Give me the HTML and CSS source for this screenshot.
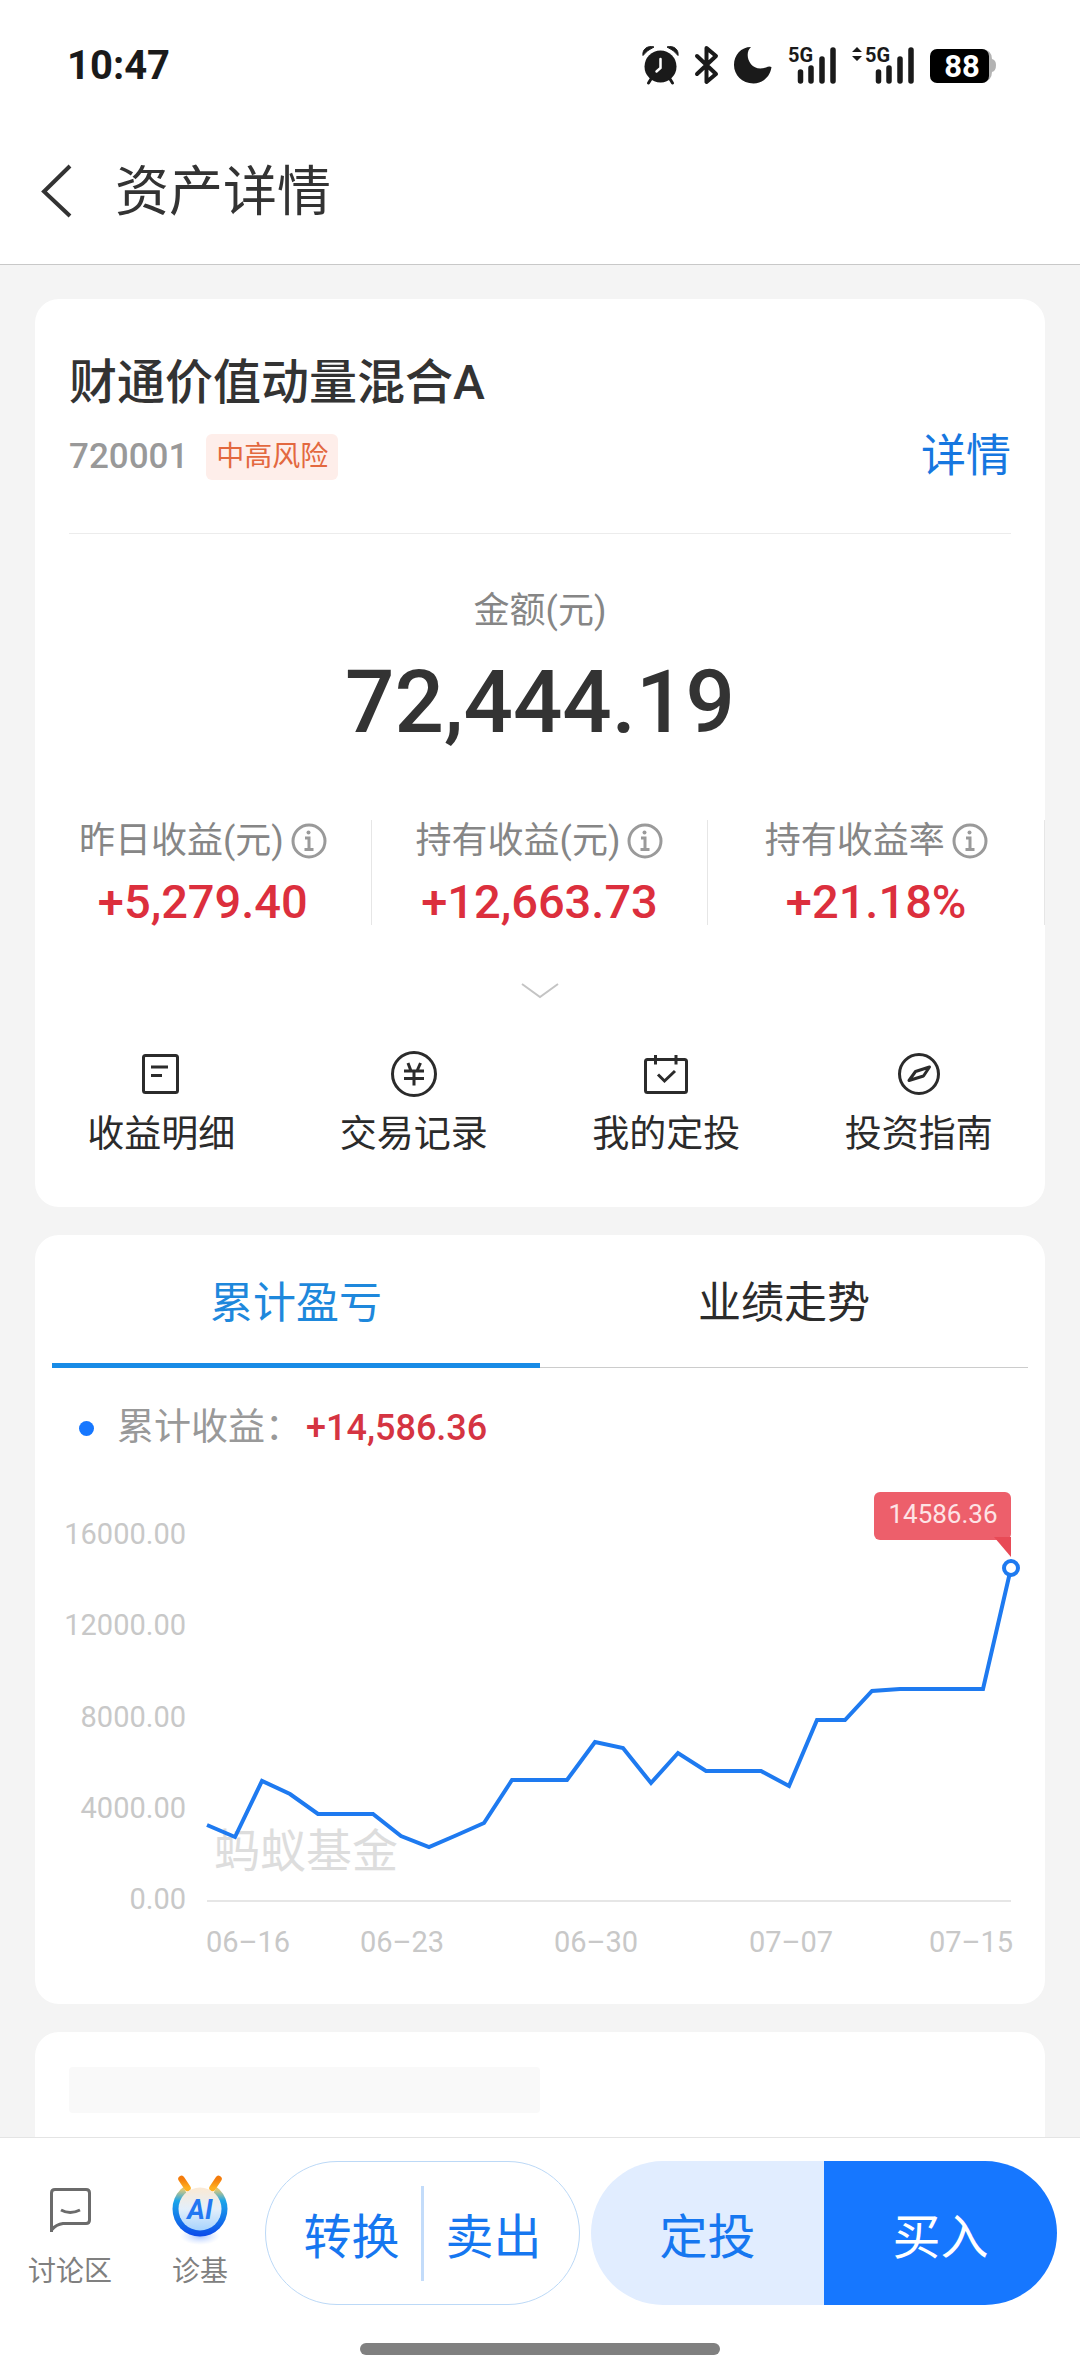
FILE: index.html
```html
<!DOCTYPE html>
<html lang="zh-CN">
<head>
  <meta charset="UTF-8" />
  <meta name="viewport" content="width=device-width, initial-scale=1.0" />
  <title>资产详情</title>
  <link rel="stylesheet" href="styles.css">
</head>
<body>
  <header class="header">
    <div class="status-bar">
      <span class="time">10:47</span>
      <div class="status-icons">
        <svg width="37" height="38" viewBox="0 0 37 38">
          <circle cx="18.500" cy="20.500" r="16" fill="#1a1a1a"/>
          <path d="M1 9.500C0 4 5-1 12 1Q5 4 1 9.500ZM36 9.500C37 4 32-1 25 1Q32 4 36 9.500Z" fill="#1a1a1a" stroke="#1a1a1a" stroke-width="1"/>
          <path d="M9 33L6.500 37M28 33L30.500 37" stroke="#1a1a1a" stroke-width="3" stroke-linecap="round"/>
          <path d="M18.500 13V22L14.500 25.500" fill="none" stroke="#fff" stroke-width="2.500" stroke-linecap="round"/>
        </svg>
        <svg width="23" height="38" viewBox="0 0 23 38">
          <path d="M2 10L21 28L11.500 36V2L21 10L2 28" fill="none" stroke="#1a1a1a" stroke-width="4" stroke-linecap="round" stroke-linejoin="round"/>
        </svg>
        <svg width="38" height="38" viewBox="0 0 38 38">
          <path d="M17 1C9 8 16 27 32 21.500Q35 20 37.500 21C36 31 29 37 19.500 37.500C8 37.500 0 29 0 19C0 9 7 1 17 1Z" fill="#1a1a1a"/>
        </svg>
        <svg width="48" height="38" viewBox="0 0 48 38">
          <text class="net" x="0" y="16">5G</text>
          <path d="M12.500 26V35M23 22V35M34 13V35M45 4V35" stroke="#1a1a1a" stroke-width="5.500" stroke-linecap="round"/>
        </svg>
        <svg width="62" height="38" viewBox="0 0 62 38">
          <path d="M0 6L5 1L10 6ZM0 10L5 15L10 10Z" fill="#1a1a1a"/>
          <text class="net" x="13" y="16">5G</text>
          <path d="M26.500 26V35M37 22V35M48 13V35M59 4V35" stroke="#1a1a1a" stroke-width="5.500" stroke-linecap="round"/>
        </svg>
        <svg width="66" height="38" viewBox="0 0 66 38">
          <path d="M52 3Q62 4 62 13Q66 14 66 19Q66 25 62 26Q62 35 52 37Z" fill="#b3b3b3"/>
          <rect x="0" y="3" width="59" height="34" rx="7" fill="#000"/>
          <text class="battery" x="32" y="31">88</text>
        </svg>
      </div>
    </div>
    <div class="nav">
      <button class="back" aria-label="返回">
        <svg width="31" height="52" viewBox="0 0 31 52">
          <path d="M29 1L3 26.500L29 51" fill="none" stroke="#333" stroke-width="4"/>
        </svg>
      </button>
      <h1>资产详情</h1>
    </div>
  </header>

  <main>
    <section class="card asset">
      <div class="fund">
        <h2>财通价值动量混合A</h2>
        <div class="fund-row">
          <span class="code">720001</span>
          <span class="risk">中高风险</span>
          <a class="detail" href="#">详情</a>
        </div>
      </div>

      <div class="amount-label">金额(元)</div>
      <div class="amount">72,444.19</div>

      <div class="stats">
        <div class="stat">
          <div class="stat-label">昨日收益(元)
            <svg class="info" viewBox="0 0 36 36"><circle cx="18" cy="18" r="16"/><path d="M14 15H18V26M13.500 26.500H22.500"/><circle class="info-dot" cx="17.500" cy="9.500" r="2"/></svg>
          </div>
          <div class="stat-value">+5,279.40</div>
        </div>
        <div class="stat">
          <div class="stat-label">持有收益(元)
            <svg class="info" viewBox="0 0 36 36"><circle cx="18" cy="18" r="16"/><path d="M14 15H18V26M13.500 26.500H22.500"/><circle class="info-dot" cx="17.500" cy="9.500" r="2"/></svg>
          </div>
          <div class="stat-value">+12,663.73</div>
        </div>
        <div class="stat">
          <div class="stat-label">持有收益率
            <svg class="info" viewBox="0 0 36 36"><circle cx="18" cy="18" r="16"/><path d="M14 15H18V26M13.500 26.500H22.500"/><circle class="info-dot" cx="17.500" cy="9.500" r="2"/></svg>
          </div>
          <div class="stat-value">+21.18%</div>
        </div>
      </div>

      <button class="expand" aria-label="展开">
        <svg width="38" height="16" viewBox="0 0 38 16"><path d="M1 1L19 14L37 1" fill="none" stroke="#c4c4c4" stroke-width="2"/></svg>
      </button>

      <div class="actions">
        <button class="action">
          <svg class="action-icon" viewBox="0 0 46 46"><rect x="5.500" y="4.500" width="34" height="37" rx="2"/><path d="M13 16H30M13 24.500H24"/></svg>
          收益明细
        </button>
        <button class="action">
          <svg class="action-icon" viewBox="0 0 46 46"><circle cx="23" cy="23" r="21.500"/><path d="M17 12L20 20M29.500 12L26 20M23 20V34.500M13 20H33M13 27.500H33"/></svg>
          交易记录
        </button>
        <button class="action">
          <svg class="action-icon" viewBox="0 0 46 46"><rect x="2.500" y="8.500" width="41" height="33" rx="2"/><path d="M12.500 4V13.500M33 4V13.500M15 23.500L21.500 30L32 20"/></svg>
          我的定投
        </button>
        <button class="action">
          <svg class="action-icon" viewBox="0 0 46 46"><circle cx="23" cy="23" r="19.500"/><path d="M33.500 16L27.500 25L13 29.500L19.500 20.500Z" stroke-linejoin="round"/></svg>
          投资指南
        </button>
      </div>
    </section>

    <section class="card trend">
      <div class="tabs">
        <button class="tab active">累计盈亏</button>
        <button class="tab">业绩走势</button>
      </div>
      <div class="legend">
        <i class="dot"></i>
        <span class="legend-label">累计收益：</span>
        <span class="legend-value">+14,586.36</span>
      </div>

      <svg class="chart" viewBox="0 0 1010 554">
        <g class="y-axis">
          <text x="151" y="94">16000.00</text>
          <text x="151" y="185">12000.00</text>
          <text x="151" y="277">8000.00</text>
          <text x="151" y="368">4000.00</text>
          <text x="151" y="459">0.00</text>
        </g>
        <text class="watermark" x="179" y="417">蚂蚁基金</text>
        <line x1="172" y1="451" x2="976" y2="451" stroke="#e6e6e6" stroke-width="2"/>
        <polyline class="line" points="172,375 200,387 227,331 255,344 283,364 311,364 338,364 366,386 394,397 422,385 449,373 477,330 505,330 532,330 560,292 588,298 616,333 643,303 671,321 699,321 726,321 754,336 782,270 810,270 837,241 865,239 893,239 921,239 948,239 976,118"/>
        <circle cx="976" cy="118" r="7" fill="#fff" stroke="#1e7af0" stroke-width="4"/>
        <!-- 最新收益提示 -->
        <rect x="839" y="42" width="137" height="48" rx="6" fill="#ed5f6b"/>
        <path d="M959 87H976V107Z" fill="#e84a56"/>
        <text class="tip" x="908" y="73">14586.36</text>
        <g class="x-axis">
          <text x="213" y="502">06–16</text>
          <text x="367" y="502">06–23</text>
          <text x="561" y="502">06–30</text>
          <text x="756" y="502">07–07</text>
          <text x="936" y="502">07–15</text>
        </g>
      </svg>
    </section>

    <section class="card">
      <div class="skeleton"></div>
    </section>
  </main>

  <footer class="footer">
    <div class="toolbar">
      <a class="tool" href="#">
        <svg width="66" height="74" viewBox="0 0 66 74">
          <path d="M14.500 58V19Q14.500 15.500 18 15.500H49Q52.500 15.500 52.500 19V46Q52.500 49.500 49 49.500H26Q19 50.500 15 55.500" fill="none" stroke="#6b6b6b" stroke-width="3"/>
          <path d="M24 36Q33 41 43 36" fill="none" stroke="#6b6b6b" stroke-width="3"/>
        </svg>
        讨论区
      </a>
      <a class="tool" href="#">
        <svg width="66" height="74" viewBox="0 0 66 74">
          <defs>
            <linearGradient id="ring" x1="0" y1="0" x2="0" y2="1">
              <stop offset="0" stop-color="#ffb52e"/>
              <stop offset="0.150" stop-color="#d9c77a"/>
              <stop offset="0.350" stop-color="#1ba6ea"/>
              <stop offset="1" stop-color="#0c49ea"/>
            </linearGradient>
            <linearGradient id="face" x1="0" y1="0" x2="0" y2="1">
              <stop offset="0" stop-color="#fbe9d3"/>
              <stop offset="0.500" stop-color="#e3effb"/>
              <stop offset="1" stop-color="#a6d3fd"/>
            </linearGradient>
            <linearGradient id="horn" x1="0" y1="0" x2="0" y2="1">
              <stop offset="0" stop-color="#f47c0c"/>
              <stop offset="1" stop-color="#ffb020"/>
            </linearGradient>
            <radialGradient id="glow">
              <stop offset="0" stop-color="#7ba6ff" stop-opacity="0.700"/>
              <stop offset="1" stop-color="#b9d0ff" stop-opacity="0"/>
            </radialGradient>
          </defs>
          <ellipse cx="33" cy="62" rx="20" ry="9" fill="url(#glow)"/>
          <circle cx="33" cy="35" r="27.500" fill="url(#ring)"/>
          <path d="M12 4H54L46 20Q33 9 20 20Z" fill="#fff"/>
          <path d="M14.500 5L20.500 14M51.500 5L45.500 14" stroke="url(#horn)" stroke-width="6.500" stroke-linecap="round"/>
          <circle cx="33" cy="35" r="21.500" fill="url(#face)"/>
          <text class="ai" x="33" y="45">AI</text>
        </svg>
        诊基
      </a>
      <div class="group outline">
        <button class="btn">转换</button>
        <i class="split"></i>
        <button class="btn">卖出</button>
      </div>
      <div class="group solid">
        <button class="btn btn-plan">定投</button>
        <button class="btn btn-buy">买入</button>
      </div>
    </div>
    <div class="home-bar"></div>
  </footer>
</body>
</html>
```

FILE: styles.css
```css
* { box-sizing: border-box; margin: 0; padding: 0; }
body {
  background: #f4f4f4;
  color: #333;
  font-family: Roboto, "Noto Sans CJK SC", sans-serif;
  min-height: 100vh;
  overflow: hidden;
}
button {
  border: none;
  background: none;
  font-family: inherit;
  color: inherit;
  cursor: pointer;
}
a { text-decoration: none; }
svg {
  display: block;
  overflow: visible;
}

/* 顶部 */
.header {
  background: #fff;
  border-bottom: 1px solid #c8c8c8;
}
.status-bar {
  display: flex;
  justify-content: space-between;
  align-items: center;
  height: 118px;
  padding: 12px 84px 0 67px;
}
.time {
  font-size: 40px;
  font-weight: 700;
  color: #1a1a1a;
}
.status-icons {
  display: flex;
  gap: 16px;
}
.net {
  font-size: 20px;
  font-weight: 700;
  fill: #1a1a1a;
}
.battery {
  font-size: 31px;
  font-weight: 700;
  fill: #fff;
  text-anchor: middle;
}
.nav {
  display: flex;
  align-items: center;
  gap: 43px;
  height: 146px;
  padding-left: 41px;
}
.nav h1 {
  font-size: 54px;
  font-weight: 400;
  line-height: 64px;
  padding-top: 4px;
}

/* 卡片 */
main { padding: 34px 35px 0; }
.card {
  background: #fff;
  border-radius: 24px;
  margin-bottom: 28px;
  overflow: hidden;
}
.asset { padding: 52px 0 50px; }
.fund {
  margin: 0 34px;
  padding-bottom: 53px;
  border-bottom: 1px solid #ececec;
}
.fund h2 {
  font-size: 48px;
  font-weight: 500;
  line-height: 64px;
}
.fund-row {
  display: flex;
  align-items: center;
  height: 46px;
  margin-top: 19px;
  line-height: 46px;
}
.code {
  font-size: 35px;
  font-weight: 500;
  color: #999;
}
.risk {
  margin-left: 18px;
  padding: 0 10px;
  border-radius: 6px;
  background: #feeeea;
  color: #e3683f;
  font-size: 28px;
}
.detail {
  margin-left: auto;
  color: #1677e0;
  font-size: 45px;
}
.amount-label {
  margin-top: 55px;
  text-align: center;
  font-size: 36px;
  line-height: 44px;
  color: #868686;
}
.amount {
  margin-top: 24px;
  text-align: center;
  font-size: 87px;
  font-weight: 500;
  line-height: 90px;
}
.stats {
  display: grid;
  grid-template-columns: repeat(3, 1fr);
  margin-top: 73px;
}
.stat {
  border-right: 1px solid #e6e6e6;
  text-align: center;
}
.stat-label {
  display: flex;
  justify-content: center;
  align-items: center;
  gap: 7px;
  font-size: 36px;
  line-height: 42px;
  color: #868686;
}
.info {
  width: 36px;
  height: 36px;
  fill: none;
  stroke: #9a9a9a;
  stroke-width: 3;
}
.info-dot {
  fill: #9a9a9a;
  stroke: none;
}
.stat-value {
  margin-top: 17px;
  font-size: 47px;
  font-weight: 500;
  line-height: 46px;
  color: #dc2f3d;
}
.expand {
  display: block;
  margin: 58px auto 0;
}
.actions {
  display: grid;
  grid-template-columns: repeat(4, 1fr);
  margin-top: 52px;
}
.action {
  display: flex;
  flex-direction: column;
  align-items: center;
  gap: 16px;
  font-size: 37px;
  line-height: 44px;
  color: #2b2b2b;
}
.action-icon {
  width: 46px;
  height: 46px;
  fill: none;
  stroke: #2b2b2b;
  stroke-width: 3;
}

/* 收益走势 */
.tabs {
  display: flex;
  margin: 0 17px;
}
.tab {
  flex: 1;
  height: 133px;
  padding-bottom: 6px;
  font-size: 43px;
  color: #2b2b2b;
  box-shadow: inset 0 -1px #ccc;
}
.tab.active {
  color: #1e88dc;
  box-shadow: inset 0 -5px #188be6;
}
.legend {
  display: flex;
  align-items: center;
  margin-top: 38px;
  padding-left: 44px;
  line-height: 44px;
  font-size: 37px;
}
.dot {
  width: 15px;
  height: 15px;
  margin-right: 23px;
  border-radius: 50%;
  background: #1677ff;
}
.legend-label { color: #999; }
.legend-value {
  margin-left: 4px;
  font-size: 36px;
  font-weight: 500;
  color: #d53442;
}
.chart {
  width: 100%;
  height: auto;
}
.y-axis, .x-axis {
  font-size: 29px;
  fill: #c8c8c8;
}
.y-axis { text-anchor: end; }
.x-axis { text-anchor: middle; }
.watermark {
  font-size: 46px;
  fill: #ddd;
}
.line {
  fill: none;
  stroke: #1e7af0;
  stroke-width: 4;
}
.tip {
  font-size: 26px;
  fill: #fde3e5;
  text-anchor: middle;
}
.skeleton {
  width: calc(50% - 34px);
  height: 46px;
  margin: 35px 34px 200px;
  border-radius: 4px;
  background: #f9f9f9;
}

/* 底部操作栏 */
.footer {
  position: fixed;
  left: 0;
  right: 0;
  bottom: 0;
  background: #fff;
  border-top: 1px solid #e4e4e4;
}
.toolbar {
  display: flex;
  align-items: center;
  padding: 23px 23px 0 5px;
}
.tool {
  display: flex;
  flex-direction: column;
  align-items: center;
  gap: 4px;
  width: 130px;
  font-size: 28px;
  line-height: 40px;
  color: #808080;
}
.ai {
  font-size: 27px;
  font-weight: 700;
  font-style: italic;
  fill: #2277f2;
  text-anchor: middle;
}
.group {
  display: flex;
  align-items: center;
  height: 144px;
  border-radius: 72px;
  overflow: hidden;
}
.outline {
  flex: 281;
  padding: 0 16px;
  margin-right: 11px;
  border: 1px solid #bcd9f7;
}
.solid { flex: 466; }
.btn {
  flex: 1;
  height: 100%;
  font-size: 48px;
  color: #1677f0;
}
.btn-plan { background: #e1edff; }
.btn-buy {
  background: #1677ff;
  color: #fff;
}
.split {
  width: 3px;
  height: 95px;
  background: #c3dcfa;
}
.home-bar {
  width: 360px;
  height: 12px;
  margin: 38px auto 21px;
  border-radius: 6px;
  background: #808080;
}
```
